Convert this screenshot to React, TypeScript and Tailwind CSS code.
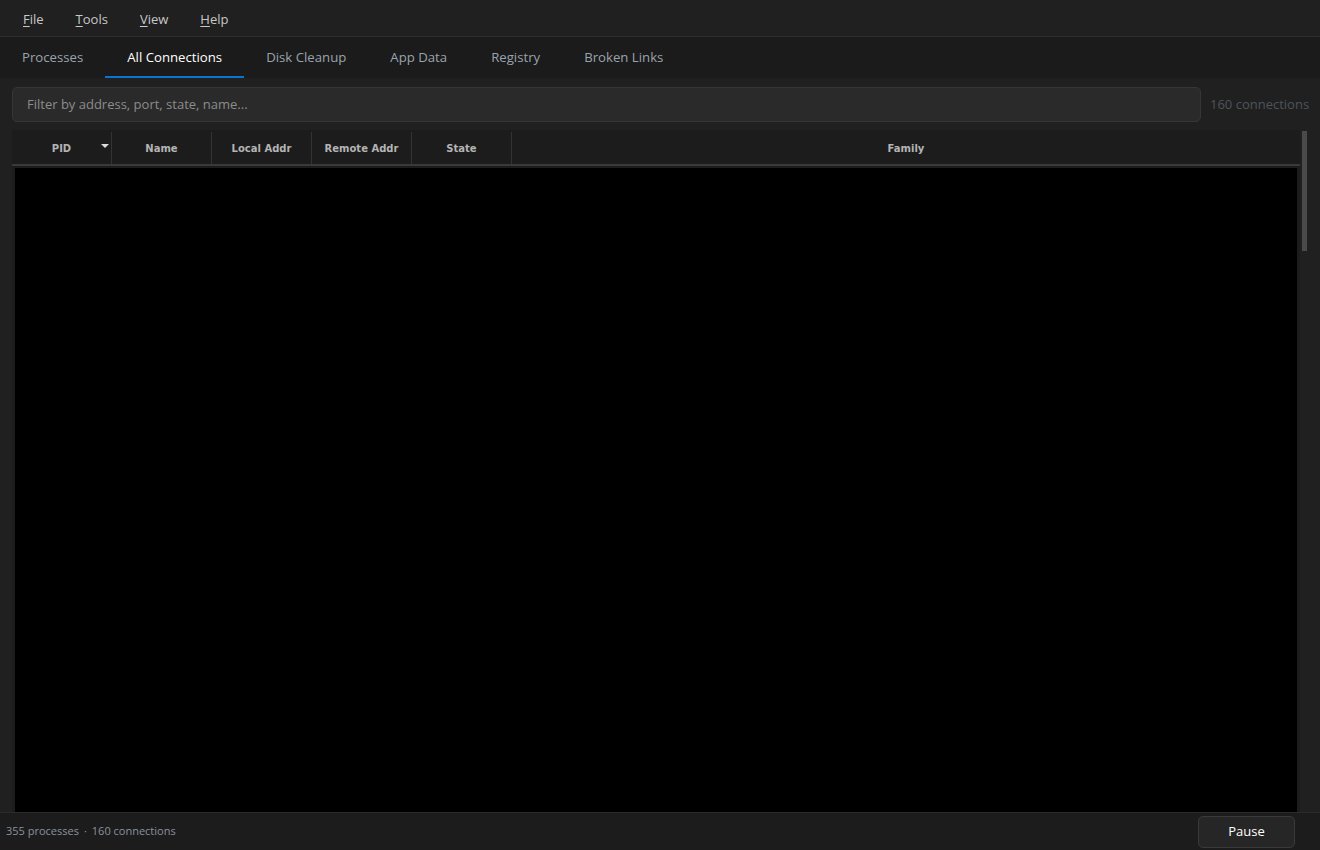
import React from 'react';

const menus = [
	{ key: 'F', rest: 'ile' },
	{ key: 'T', rest: 'ools' },
	{ key: 'V', rest: 'iew' },
	{ key: 'H', rest: 'elp' },
];

const tabs = ['Processes', 'All Connections', 'Disk Cleanup', 'App Data', 'Registry', 'Broken Links'];

const columns = ['PID', 'Name', 'Local Addr', 'Remote Addr', 'State'];

export default function App()
{
	return (
		<div className="w-[1320px] h-[850px] flex flex-col bg-[#202020] text-[#cccccc] overflow-hidden" style={{ fontFamily: '"Open Sans", "Noto Sans", sans-serif' }}>
			{/* menu bar */}
			<div className="h-[37px] flex items-center gap-[32px] pl-[23px] pt-[3px] border-b border-[#2e2e2e] bg-[#202020] text-[13px] text-[#c8c8c8]">
				{menus.map(m => (
					<span key={m.key}>
						<span className="underline underline-offset-2">{m.key}</span>{m.rest}
					</span>
				))}
			</div>

			{/* tabs */}
			<div className="h-[41px] flex bg-[#1b1b1b] text-[13.2px]">
				{tabs.map(t => (
					<div
						key={t}
						className={`px-[22px] pt-[2px] flex items-center border-b-2 ${t === 'All Connections' ? 'border-[#0a74d0] text-white' : 'border-transparent text-[#9aa3ad]'}`}
					>
						{t}
					</div>
				))}
			</div>

			{/* content */}
			<div className="flex-1 flex flex-col px-[12px] pt-[9px] min-h-0">
				<div className="flex items-center">
					<div className="flex-1 h-[35px] rounded-[5px] border border-[#363636] bg-[#2a2a2a] flex items-center px-[14px] text-[13px] text-[#8c8c8c]">
						Filter by address, port, state, name...
					</div>
					<div className="w-[107px] pl-[9px] whitespace-nowrap text-[13px] text-[#4e545a]">160 connections</div>
				</div>

				<div className="flex-1 flex mt-[8px] min-h-0 -mr-[12px]">
					<div className="flex-1 flex flex-col bg-[#1c1c1c]">
						<div className="h-[36px] pt-[2px] flex border-b-2 border-[#3a3a3a] text-[10px] font-bold text-[#b4b4b4]" style={{ fontFamily: '"DejaVu Sans", sans-serif' }}>
							{columns.map((c, i) => (
								<div key={c} className="relative w-[100px] flex items-center justify-center border-r border-[#333333]">
									{c}
									{i === 0 && (
										<svg className="absolute right-[2px] top-[12px]" width="8" height="5" viewBox="0 0 8 5">
											<path d="M0 0 L8 0 L4 4 Z" fill="#dcdcdc" />
										</svg>
									)}
								</div>
							))}
							<div className="flex-1 flex items-center justify-center">Family</div>
						</div>
						<div className="flex-1 mx-[3px] mt-[2px] bg-black" />
					</div>
					<div className="w-[20px] pt-[1px] pl-[2px] bg-[#202020]">
						<div className="w-[5px] h-[120px] bg-[#4a4a4a]" />
					</div>
				</div>
			</div>

			{/* status bar */}
			<div className="h-[38px] flex items-center justify-between pl-[6px] pr-[25px] bg-[#1c1c1c] border-t border-[#2a2a2a]">
				<span className="text-[11px] text-[#8a929c]">
					355 processes<span className="mx-[5px]">·</span>160 connections
				</span>
				<button className="w-[97px] h-[32px] rounded-[5px] border border-[#3a3a3a] bg-[#262626] text-[13px] text-white">Pause</button>
			</div>
		</div>
	);
}
